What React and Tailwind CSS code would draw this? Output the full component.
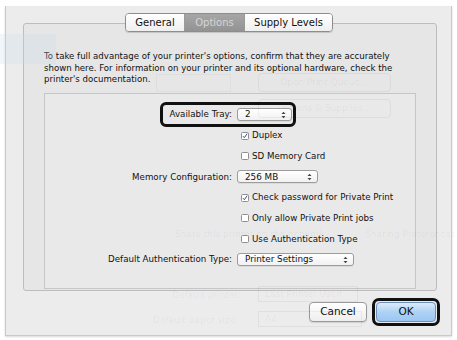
import React from 'react';

const Arrows = () => (
  <svg width="5" height="8" viewBox="0 0 5 8" className="shrink-0">
    <path d="M0.5 3 L2.5 0.8 L4.5 3 Z M0.5 5 L2.5 7.2 L4.5 5 Z" fill="#444" />
  </svg>
);

function Popup({ value, width }) {
  return (
    <div
      className={`flex items-center justify-between h-[13px] pl-[7px] pr-[5px] rounded-[3px] border border-[#9c9c9c] bg-gradient-to-b from-white to-[#f1f1f1] shadow-[0_1px_0_rgba(0,0,0,0.06)] ${width}`}
    >
      <span className="text-[8.8px] leading-none text-[#111]">{value}</span>
      <Arrows />
    </div>
  );
}

function Check({ checked, label }) {
  return (
    <div className="flex items-center gap-[3px] pl-[4px]">
      <div className="w-[8px] h-[8px] rounded-[1.5px] border border-[#8f8f8f] bg-white flex items-center justify-center">
        {checked && (
          <svg width="8" height="8" viewBox="0 0 8 8">
            <path d="M1.3 4.2 L3.2 6.3 L6.9 0.8" stroke="#2a4f86" strokeWidth="1.3" fill="none" />
          </svg>
        )}
      </div>
      <span className="text-[8.7px] leading-none text-[#111]">{label}</span>
    </div>
  );
}

function Row({ label, children }) {
  return (
    <div className="grid grid-cols-[187px_1fr] gap-x-[5px] h-[20.7px] items-center">
      <span className="text-[8.7px] leading-none text-[#111] text-right">{label}</span>
      <div className="flex items-center">{children}</div>
    </div>
  );
}

// faint content of the window behind the sheet
function Ghost() {
  return (
    <div className="absolute inset-0 pointer-events-none text-[9px] text-black/[0.05] whitespace-nowrap">
      <div className="absolute -left-[6px] top-[28px] w-[56px] h-[30px] bg-[#c9dcf0]/25" />
      <div className="absolute left-[252px] top-[67px] w-[133px] h-[19px] rounded border border-black/[0.05] flex items-center justify-center">Open Print Queue...</div>
      <div className="absolute left-[150px] top-[68px] w-[75px] h-[18px] border border-black/[0.03]" />
      <div className="absolute left-[252px] top-[93px] w-[133px] h-[19px] rounded border border-black/[0.05] flex items-center justify-center">Options &amp; Supplies...</div>
      <div className="absolute left-[169px] top-[222px]">Share this printer on the network</div>
      <div className="absolute left-[359px] top-[222px]">Sharing Preferences...</div>
      <div className="absolute left-[166px] top-[283px]">Default printer:</div>
      <div className="absolute left-[252px] top-[280px] w-[100px] h-[16px] border border-black/[0.05] pl-[6px] leading-[14px]">Last Printer Used</div>
      <div className="absolute left-[147px] top-[308px]">Default paper size:</div>
      <div className="absolute left-[252px] top-[305px] w-[104px] h-[16px] border border-black/[0.05] pl-[6px] leading-[14px]">A4</div>
    </div>
  );
}

export default function App() {
  return (
    <div className="w-[457px] h-[340px] bg-white overflow-hidden font-['DejaVu_Sans',sans-serif] antialiased">
      <div className="relative ml-[5px] mt-[6px] w-[447px] h-[330px] bg-[#ececec] border-x border-b border-[#c9c9c9] shadow-[0_1px_2px_rgba(0,0,0,0.15)] flex flex-col">
        {/* group box with tabs */}
        <div className="relative ml-[17px] mt-[17px] w-[414px] h-[268px] bg-[#e6e6e6] border border-[#bdbdbd] rounded-[3px] flex flex-col">
          <div className="flex justify-center -mt-[11px] mr-[2px]">
            <div className="flex h-[19px] rounded-[4px] border border-[#8d8d8d] overflow-hidden shadow-[0_1px_1px_rgba(0,0,0,0.15)] text-[10px]">
              <div className="w-[59px] flex items-center justify-center bg-gradient-to-b from-white to-[#efefef] text-[#111] border-r border-[#9a9a9a]">General</div>
              <div className="w-[59px] flex items-center justify-center bg-gradient-to-b from-[#a6a6a6] to-[#939393] text-[#d6d6d6]">Options</div>
              <div className="w-[88px] flex items-center justify-center bg-gradient-to-b from-white to-[#efefef] text-[#111] border-l border-[#9a9a9a]">Supply Levels</div>
            </div>
          </div>

          <p className="mt-[19px] ml-[20px] mr-[18px] text-[8.6px] leading-[11.5px] text-[#111]">
            To take full advantage of your printer's options, confirm that they are accurately shown here. For information on your printer and its optional hardware, check the printer's documentation.
          </p>

          <div className="relative mt-[7.5px] ml-[20px] w-[372px] h-[196px] bg-[#e9e9e9] border border-[#c6c6c6] pt-[10.5px]">
            <Row label="Available Tray:">
              <Popup value="2" width="w-[55px]" />
            </Row>
            <Row label="">
              <Check checked label="Duplex" />
            </Row>
            <Row label="">
              <Check label="SD Memory Card" />
            </Row>
            <Row label="Memory Configuration:">
              <Popup value="256 MB" width="w-[81px]" />
            </Row>
            <Row label="">
              <Check checked label="Check password for Private Print" />
            </Row>
            <Row label="">
              <Check label="Only allow Private Print jobs" />
            </Row>
            <Row label="">
              <Check label="Use Authentication Type" />
            </Row>
            <Row label="Default Authentication Type:">
              <Popup value="Printer Settings" width="w-[117px]" />
            </Row>
            {/* highlight ring */}
            <div className="absolute left-[115px] top-[8px] w-[136px] h-[25px] rounded-[6px] border-[3px] border-[#111]" />
          </div>
        </div>

        {/* buttons */}
        <div className="flex justify-end items-center gap-[5px] mt-[7px] mr-[11px]">
          <div className="w-[58px] h-[20px] rounded-[4px] border border-[#9a9a9a] bg-gradient-to-b from-white to-[#eeeeee] shadow-[0_1px_1px_rgba(0,0,0,0.12)] flex items-center justify-center text-[10.5px] text-[#111]">
            Cancel
          </div>
          <div className="p-[1px] rounded-[7px] border-[3px] border-[#111]">
            <div className="w-[60px] h-[20px] rounded-[4px] border border-[#6d8fb8] bg-gradient-to-b from-[#dcecfb] via-[#aed2f5] to-[#9bc7f3] flex items-center justify-center text-[10.5px] text-[#111]">
              OK
            </div>
          </div>
        </div>

        <Ghost />
      </div>
    </div>
  );
}
